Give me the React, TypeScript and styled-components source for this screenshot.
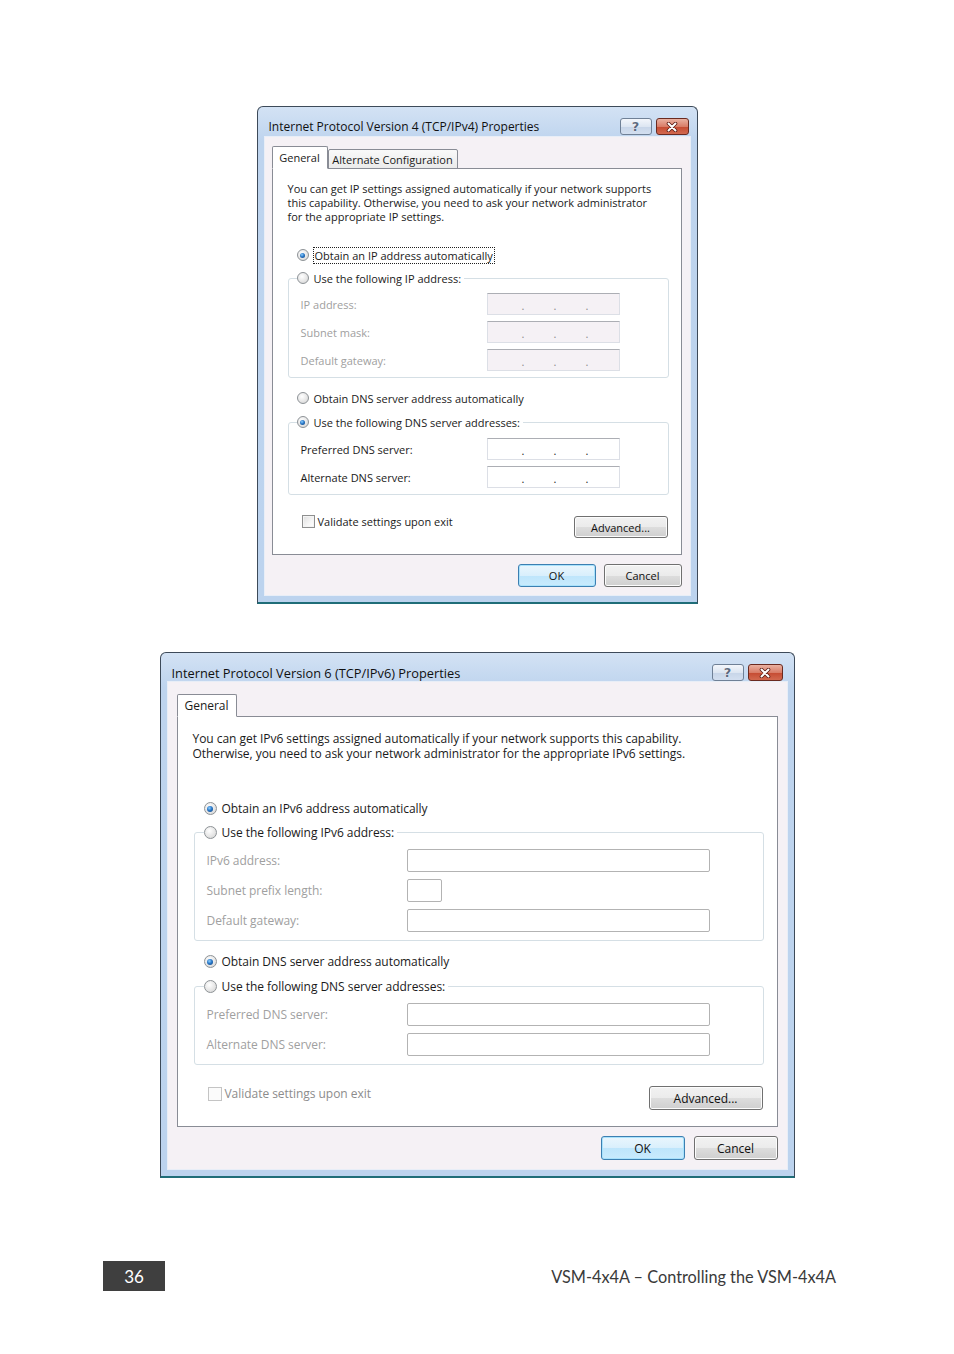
import React from "react";
import styled, { createGlobalStyle } from "styled-components";

type S = "sm" | "lg";

const M = {
  sm: { fs: 11, tfs: 12, lh: 14, radio: 12, check: 13, fieldH: 22, fieldGap: 6, labelCol: 186, ls: 0 },
  lg: { fs: 12, tfs: 12.8, lh: 15, radio: 13, check: 14, fieldH: 23, fieldGap: 7, labelCol: 200, ls: -0.04 },
};

const GlobalStyle = createGlobalStyle`
  html, body {
    margin: 0;
    padding: 0;
    background: #ffffff;
  }
  body {
    font-family: "Open Sans", "Noto Sans", sans-serif;
    color: #1a1a1a;
  }
`;

const Page = styled.div`
  width: 954px;
  height: 1354px;
  box-sizing: border-box;
  padding-top: 106px;
  display: flex;
  flex-direction: column;
  align-items: center;
`;

const Window = styled.div<{ $w: number; $mt?: number }>`
  width: ${(p) => p.$w}px;
  margin-top: ${(p) => p.$mt || 0}px;
  box-sizing: border-box;
  border: 1px solid #3d4a59;
  border-bottom: 2px solid #1f6d78;
  border-radius: 6px 6px 0 0;
  background: linear-gradient(#d3e2f4, #bed4ee 34px, #bcd3ee);
  padding: 0 7px 7px;
`;

const TitleBar = styled.div<{ $s: S; $pb: number; $pr: number }>`
  display: flex;
  align-items: center;
  justify-content: space-between;
  height: 17px;
  padding: 11px ${(p) => p.$pr}px ${(p) => p.$pb}px 4px;
  font-size: ${(p) => M[p.$s].tfs}px;
  color: #101010;
  white-space: nowrap;
`;

const CaptionButtons = styled.div`
  display: flex;
  gap: 4px;
`;

const HelpBtn = styled.div`
  width: 32px;
  height: 17px;
  box-sizing: border-box;
  border: 1px solid #6f8096;
  border-radius: 3px;
  background: linear-gradient(#f3f6fb, #dde6f2 50%, #c7d5e8 51%, #d3dff0);
  display: flex;
  align-items: center;
  justify-content: center;
  font-family: "DejaVu Sans", sans-serif;
  font-weight: bold;
  font-size: 13px;
  line-height: 1;
  color: #5d6a80;
  text-shadow: 0 0 1px #ffffff, 0 0 1px #ffffff;
`;

const CloseBtn = styled.div<{ $w: number }>`
  width: ${(p) => p.$w}px;
  height: 17px;
  box-sizing: border-box;
  border: 1px solid #6a2a20;
  border-radius: 3px;
  background: linear-gradient(#eab1a1, #d97d68 50%, #c54a31 51%, #d2694f);
  display: flex;
  align-items: center;
  justify-content: center;
`;

const Body = styled.div<{ $pad: string }>`
  background: #f5f1f5;
  padding: ${(p) => p.$pad};
  box-shadow: 0 0 0 1px #e8eef7;
`;

const TabStrip = styled.div`
  display: flex;
  align-items: flex-end;
  margin-bottom: -1px;
  position: relative;
  z-index: 1;
`;

const Tab = styled.div<{ $active?: boolean; $s: S; $w: number }>`
  width: ${(p) => p.$w}px;
  height: ${(p) => (p.$active ? 23 : 20)}px;
  box-sizing: border-box;
  border: 1px solid #898c95;
  border-bottom: ${(p) => (p.$active ? "1px solid #ffffff" : "1px solid #898c95")};
  border-radius: 2px 2px 0 0;
  background: ${(p) => (p.$active ? "#ffffff" : "linear-gradient(#f9f9f9, #ebebeb)")};
  display: flex;
  align-items: center;
  justify-content: center;
  font-size: ${(p) => M[p.$s].fs}px;
  letter-spacing: ${(p) => M[p.$s].ls}px;
  white-space: nowrap;
`;

const Panel = styled.div<{ $pad: string }>`
  background: #ffffff;
  border: 1px solid #898c95;
  padding: ${(p) => p.$pad};
  display: flex;
  flex-direction: column;
`;

const Intro = styled.p<{ $s: S; $ml?: number }>`
  margin: 0 0 0 ${(p) => p.$ml || 0}px;
  font-size: ${(p) => M[p.$s].fs}px;
  line-height: ${(p) => M[p.$s].lh}px;
  letter-spacing: ${(p) => M[p.$s].ls}px;
  white-space: nowrap;
`;

const Option = styled.div<{ $s: S; $mt: number; $ml: number }>`
  display: flex;
  align-items: center;
  gap: 5px;
  height: ${(p) => M[p.$s].lh}px;
  margin: ${(p) => p.$mt}px 0 0 ${(p) => p.$ml}px;
  font-size: ${(p) => M[p.$s].fs}px;
  letter-spacing: ${(p) => M[p.$s].ls}px;
  white-space: nowrap;
`;

const Radio = styled.span<{ $s: S; $on?: boolean }>`
  position: relative;
  flex: none;
  width: ${(p) => M[p.$s].radio}px;
  height: ${(p) => M[p.$s].radio}px;
  box-sizing: border-box;
  border-radius: 50%;
  border: 1px solid #8d9296;
  background: radial-gradient(circle at 40% 35%, #ffffff, #e4e4e4 60%, #cfcfcf);
  &::after {
    content: "";
    display: ${(p) => (p.$on ? "block" : "none")};
    position: absolute;
    inset: 2.5px;
    border-radius: 50%;
    background: radial-gradient(circle at 40% 35%, #8fd0ff, #2a78c8 45%, #0f3e78);
  }
`;

const Focus = styled.span`
  outline: 1px dotted #202020;
  outline-offset: 0;
  padding: 0 1px;
`;

const Group = styled.fieldset<{ $mt: number }>`
  margin: ${(p) => p.$mt}px 0 0 0;
  padding: 0;
  border: 1px solid #d5dfe5;
  border-radius: 3px;
  min-width: 0;
`;

const Legend = styled.legend<{ $s: S; $ml: number }>`
  display: flex;
  align-items: center;
  gap: 5px;
  height: ${(p) => M[p.$s].lh}px;
  margin-left: ${(p) => p.$ml}px;
  padding: 0 3px 0 0;
  font-size: ${(p) => M[p.$s].fs}px;
  letter-spacing: ${(p) => M[p.$s].ls}px;
  white-space: nowrap;
`;

const FieldGrid = styled.div<{ $s: S; $pt: number; $pb: number }>`
  display: grid;
  grid-template-columns: ${(p) => M[p.$s].labelCol}px auto;
  justify-content: start;
  align-items: center;
  row-gap: ${(p) => M[p.$s].fieldGap}px;
  grid-auto-rows: ${(p) => M[p.$s].fieldH}px;
  padding: ${(p) => p.$pt}px 0 ${(p) => p.$pb}px 12px;
  font-size: ${(p) => M[p.$s].fs}px;
  letter-spacing: ${(p) => M[p.$s].ls}px;
`;

const FieldLabel = styled.span<{ $off?: boolean }>`
  color: ${(p) => (p.$off ? "#a0a0a0" : "#1a1a1a")};
  white-space: nowrap;
`;

const IpBox = styled.div<{ $off?: boolean }>`
  width: 133px;
  height: 22px;
  box-sizing: border-box;
  border: 1px solid #dcdfe6;
  border-top-color: #acaeb4;
  background: ${(p) => (p.$off ? "#f5f1f5" : "#ffffff")};
  display: flex;
  align-items: center;
  gap: 29px;
  padding: 2px 0 0 34px;
  font-size: 11px;
  color: ${(p) => (p.$off ? "#8a8a8a" : "#1a1a1a")};
`;

const Dot = styled.span`
  width: 3px;
  text-align: center;
`;

const TextBox = styled.div<{ $w: number }>`
  width: ${(p) => p.$w}px;
  height: 23px;
  box-sizing: border-box;
  border: 1px solid #b3b3b3;
  border-radius: 2px;
  background: #ffffff;
`;

const BottomRow = styled.div<{ $mt: number }>`
  display: flex;
  justify-content: space-between;
  align-items: flex-start;
  margin-top: ${(p) => p.$mt}px;
`;

const CheckRow = styled.label<{ $s: S; $ml: number; $off?: boolean }>`
  display: flex;
  align-items: center;
  gap: 3px;
  margin-left: ${(p) => p.$ml}px;
  font-size: ${(p) => M[p.$s].fs}px;
  letter-spacing: ${(p) => M[p.$s].ls}px;
  color: ${(p) => (p.$off ? "#8c8c8c" : "#1a1a1a")};
  white-space: nowrap;
`;

const CheckBox = styled.span<{ $s: S; $off?: boolean }>`
  width: ${(p) => M[p.$s].check}px;
  height: ${(p) => M[p.$s].check}px;
  box-sizing: border-box;
  border: 1px solid ${(p) => (p.$off ? "#c4c4c4" : "#8e8f8f")};
  background: ${(p) =>
    p.$off ? "#fbfbfb" : "linear-gradient(135deg, #dedede, #f6f6f6 60%, #ffffff)"};
  box-shadow: ${(p) => (p.$off ? "none" : "inset 0 0 0 1px #f4f4f4")};
`;

const Button = styled.div<{ $w: number; $h: number; $s: S; $primary?: boolean; $mt?: number; $mr?: number }>`
  width: ${(p) => p.$w}px;
  height: ${(p) => p.$h}px;
  margin: ${(p) => p.$mt || 0}px ${(p) => p.$mr || 0}px 0 0;
  box-sizing: border-box;
  border: 1px solid ${(p) => (p.$primary ? "#3c7fb1" : "#707070")};
  border-radius: 3px;
  background: ${(p) =>
    p.$primary
      ? "linear-gradient(#eaf6fd, #d9effc 50%, #bee5fb 51%, #c9ebfd)"
      : "linear-gradient(#f2f2f2, #ebebeb 50%, #dddddd 51%, #cfcfcf)"};
  box-shadow: inset 0 0 0 1px ${(p) => (p.$primary ? "#a9e2fc" : "#fcfcfc")};
  display: flex;
  align-items: center;
  justify-content: center;
  font-size: ${(p) => M[p.$s].fs}px;
  letter-spacing: ${(p) => M[p.$s].ls}px;
  color: #101010;
`;

const ButtonRow = styled.div<{ $gap: number }>`
  display: flex;
  justify-content: flex-end;
  gap: ${(p) => p.$gap}px;
  margin-top: 9px;
`;

const Footer = styled.footer`
  width: 100%;
  box-sizing: border-box;
  margin-top: 83px;
  padding: 0 118px 0 103px;
  display: flex;
  align-items: center;
  justify-content: space-between;
`;

const PageNum = styled.div`
  width: 62px;
  height: 30px;
  background: #3f3f3f;
  color: #ffffff;
  display: flex;
  align-items: center;
  justify-content: center;
  font-family: "Lato", "Open Sans", sans-serif;
  font-size: 17px;
`;

const FooterTitle = styled.div`
  font-family: "Lato", "Open Sans", sans-serif;
  font-size: 16.3px;
  color: #3a3a3a;
`;

function CloseGlyph() {
  return (
    <svg width="14" height="10" viewBox="0 0 14 10">
      <path d="M3.5 1.5 L10.5 8.5 M10.5 1.5 L3.5 8.5" stroke="#5a1a12" strokeWidth="3.6" strokeLinecap="round" />
      <path d="M3.5 1.5 L10.5 8.5 M10.5 1.5 L3.5 8.5" stroke="#ffffff" strokeWidth="2" strokeLinecap="round" />
    </svg>
  );
}

function Caption({ title, s, closeW, pb, pr }: { title: string; s: S; closeW: number; pb: number; pr: number }) {
  return (
    <TitleBar $s={s} $pb={pb} $pr={pr}>
      <span>{title}</span>
      <CaptionButtons>
        <HelpBtn>?</HelpBtn>
        <CloseBtn $w={closeW}>
          <CloseGlyph />
        </CloseBtn>
      </CaptionButtons>
    </TitleBar>
  );
}

function Ip({ off }: { off?: boolean }) {
  return (
    <IpBox $off={off}>
      <Dot>.</Dot>
      <Dot>.</Dot>
      <Dot>.</Dot>
    </IpBox>
  );
}

function Ipv4Dialog() {
  const s: S = "sm";
  return (
    <Window $w={441}>
      <Caption title="Internet Protocol Version 4 (TCP/IPv4) Properties" s={s} closeW={33} pb={2} pr={1} />
      <Body $pad="9px 8px 8px 7px">
        <TabStrip>
          <Tab $active $s={s} $w={56}>General</Tab>
          <Tab $s={s} $w={130}>Alternate Configuration</Tab>
        </TabStrip>
        <Panel $pad="13px 12px 16px 15px">
          <Intro $s={s}>
            You can get IP settings assigned automatically if your network supports
            <br />
            this capability. Otherwise, you need to ask your network administrator
            <br />
            for the appropriate IP settings.
          </Intro>
          <Option $s={s} $mt={24} $ml={9}>
            <Radio $s={s} $on />
            <Focus>Obtain an IP address automatically</Focus>
          </Option>
          <Group $mt={9}>
            <Legend $s={s} $ml={8}>
              <Radio $s={s} />
              Use the following IP address:
            </Legend>
            <FieldGrid $s={s} $pt={8} $pb={6}>
              <FieldLabel $off>IP address:</FieldLabel>
              <Ip off />
              <FieldLabel $off>Subnet mask:</FieldLabel>
              <Ip off />
              <FieldLabel $off>Default gateway:</FieldLabel>
              <Ip off />
            </FieldGrid>
          </Group>
          <Option $s={s} $mt={13} $ml={9}>
            <Radio $s={s} />
            Obtain DNS server address automatically
          </Option>
          <Group $mt={10}>
            <Legend $s={s} $ml={8}>
              <Radio $s={s} $on />
              Use the following DNS server addresses:
            </Legend>
            <FieldGrid $s={s} $pt={9} $pb={6}>
              <FieldLabel>Preferred DNS server:</FieldLabel>
              <Ip />
              <FieldLabel>Alternate DNS server:</FieldLabel>
              <Ip />
            </FieldGrid>
          </Group>
          <BottomRow $mt={19}>
            <CheckRow $s={s} $ml={14}>
              <CheckBox $s={s} />
              Validate settings upon exit
            </CheckRow>
            <Button $s={s} $w={94} $h={22} $mt={2} $mr={1}>
              Advanced...
            </Button>
          </BottomRow>
        </Panel>
        <ButtonRow $gap={8}>
          <Button $s={s} $w={78} $h={23} $primary>
            OK
          </Button>
          <Button $s={s} $w={78} $h={23}>
            Cancel
          </Button>
        </ButtonRow>
      </Body>
    </Window>
  );
}

function Ipv6Dialog() {
  const s: S = "lg";
  return (
    <Window $w={635} $mt={48}>
      <Caption title="Internet Protocol Version 6 (TCP/IPv6) Properties" s={s} closeW={35} pb={1} pr={4} />
      <Body $pad="12px 9px 9px 9px">
        <TabStrip>
          <Tab $active $s={s} $w={60}>General</Tab>
        </TabStrip>
        <Panel $pad="14px 13px 16px 16px">
          <Intro $s={s} $ml={-1}>
            You can get IPv6 settings assigned automatically if your network supports this capability.
            <br />
            Otherwise, you need to ask your network administrator for the appropriate IPv6 settings.
          </Intro>
          <Option $s={s} $mt={40} $ml={10}>
            <Radio $s={s} $on />
            Obtain an IPv6 address automatically
          </Option>
          <Group $mt={9}>
            <Legend $s={s} $ml={9}>
              <Radio $s={s} />
              Use the following IPv6 address:
            </Legend>
            <FieldGrid $s={s} $pt={9} $pb={8}>
              <FieldLabel $off>IPv6 address:</FieldLabel>
              <TextBox $w={303} />
              <FieldLabel $off>Subnet prefix length:</FieldLabel>
              <TextBox $w={35} />
              <FieldLabel $off>Default gateway:</FieldLabel>
              <TextBox $w={303} />
            </FieldGrid>
          </Group>
          <Option $s={s} $mt={13} $ml={10}>
            <Radio $s={s} $on />
            Obtain DNS server address automatically
          </Option>
          <Group $mt={10}>
            <Legend $s={s} $ml={9}>
              <Radio $s={s} />
              Use the following DNS server addresses:
            </Legend>
            <FieldGrid $s={s} $pt={9} $pb={8}>
              <FieldLabel $off>Preferred DNS server:</FieldLabel>
              <TextBox $w={303} />
              <FieldLabel $off>Alternate DNS server:</FieldLabel>
              <TextBox $w={303} />
            </FieldGrid>
          </Group>
          <BottomRow $mt={20}>
            <CheckRow $s={s} $ml={14} $off>
              <CheckBox $s={s} $off />
              Validate settings upon exit
            </CheckRow>
            <Button $s={s} $w={114} $h={24} $mt={1} $mr={1}>
              Advanced...
            </Button>
          </BottomRow>
        </Panel>
        <ButtonRow $gap={9}>
          <Button $s={s} $w={84} $h={24} $primary>
            OK
          </Button>
          <Button $s={s} $w={84} $h={24}>
            Cancel
          </Button>
        </ButtonRow>
      </Body>
    </Window>
  );
}

export default function App() {
  return (
    <>
      <GlobalStyle />
      <Page>
        <Ipv4Dialog />
        <Ipv6Dialog />
        <Footer>
          <PageNum>36</PageNum>
          <FooterTitle>VSM-4x4A – Controlling the VSM-4x4A</FooterTitle>
        </Footer>
      </Page>
    </>
  );
}
